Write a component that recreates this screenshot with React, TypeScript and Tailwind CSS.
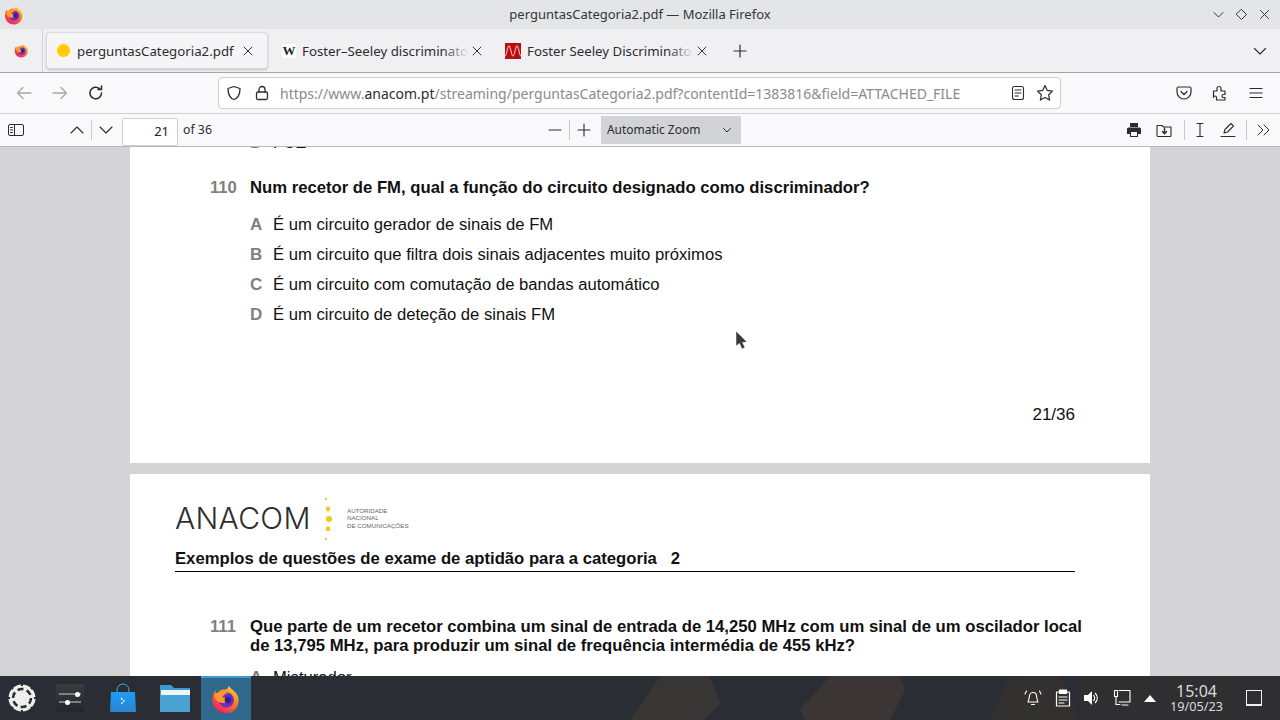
import React from "react";

const stroke = { fill: "none", stroke: "currentColor", strokeWidth: 1.3, strokeLinecap: "round" as const, strokeLinejoin: "round" as const };

function Fox({ size = 18 }: { size?: number }) {
  return (
    <svg width={size} height={size} viewBox="0 0 32 32">
      <defs>
        <linearGradient id="fxa" x1="0.8" y1="0.05" x2="0.25" y2="0.95">
          <stop offset="0" stopColor="#ffd43a" />
          <stop offset="0.45" stopColor="#ff7a1f" />
          <stop offset="1" stopColor="#f0206a" />
        </linearGradient>
      </defs>
      <path d="M19 1c0 4 8 6 10 13 2 9-4 17-13 17C7 31 1 24 1.500 15.500 2 11 3.500 8 5 7c0 2 .5 3 1.500 4C8 7 12 5 15 6c3-1 4-2 4-5z" fill="url(#fxa)" />
      <circle cx="16.500" cy="17" r="8" fill="#6a2fc0" />
      <path d="M4 11c4-3 10-3 14-1-3 0-5 2-6 4 3 1 6 0 7 2-1 4-5 5-8 4-4-1-8-4-7-9z" fill="#ff9a2e" />
      <circle cx="18" cy="17" r="3.500" fill="#3b1c8c" />
    </svg>
  );
}

function Divider() {
  return <div className="w-px h-[20px] bg-[#c8c8cb]" />;
}

function Close({ className = "" }: { className?: string }) {
  return (
    <svg width="12" height="12" viewBox="0 0 12 12" className={className} {...stroke} strokeWidth={1}>
      <path d="M2 2l8 8M10 2l-8 8" />
    </svg>
  );
}

function TitleBar() {
  return (
    <div className="h-[29px] bg-[#e3e5e7] flex items-center relative shrink-0">
      <div className="pl-[4px] w-[68px] flex"><Fox size={20} /></div>
      <div className="flex-1 text-center text-[13px] text-[#31363b]">perguntasCategoria2.pdf — Mozilla Firefox</div>
      <div className="flex items-center gap-[10px] pr-[9px] text-[#31363b]">
        <svg width="13" height="13" viewBox="0 0 13 13" {...stroke} strokeWidth={1}><path d="M2 4.500l4.500 4.500L11 4.500" /></svg>
        <svg width="13" height="13" viewBox="0 0 13 13" {...stroke} strokeWidth={1}><path d="M6.500 1.500l5 5-5 5-5-5z" /></svg>
        <svg width="13" height="13" viewBox="0 0 13 13" {...stroke} strokeWidth={1}><path d="M2.500 2.500l8 8M10.500 2.500l-8 8" /></svg>
      </div>
    </div>
  );
}

function FadeText({ children, w }: { children: React.ReactNode; w: string }) {
  return (
    <div className={`${w} overflow-hidden whitespace-nowrap text-[13.250px] text-[#2c2c30] relative pt-[3px]`}>
      {children}
      <div className="absolute right-0 top-0 bottom-0 w-[26px] bg-gradient-to-r from-transparent to-[#f0f0f2]" />
    </div>
  );
}

function TabBar() {
  return (
    <div className="h-[44px] bg-[#f0f0f2] border-b border-[#a5a5a8] flex items-center shrink-0">
      <div className="w-[43px] h-full border-r border-[#d4d4d6] flex items-center justify-center pb-[1px]"><Fox size={15} /></div>
      <div className="ml-[3px] w-[222px] h-[37px] bg-[#f5f5f7] border border-[#dcdcde] rounded-[4px] shadow-[0_1px_2px_rgba(0,0,0,0.2)] flex items-center pl-[10px]">
        <div className="w-[13px] h-[13px] rounded-full bg-[#ffc90e] ring-1 ring-[#fff6c8]" />
        <span className="ml-[7px] pt-[3px] w-[165px] text-[13.250px] text-[#2c2c30] whitespace-nowrap">perguntasCategoria2.pdf</span>
        <Close className="text-[#31363b]" />
      </div>
      <div className="ml-[14px] w-[14px] h-[14px] bg-white flex items-center justify-center text-[13px] font-bold text-[#222] font-['Liberation_Serif',serif]">W</div>
      <div className="ml-[6px]"><FadeText w="w-[167px]">Foster–Seeley discriminator</FadeText></div>
      <Close className="ml-[2px] text-[#31363b]" />
      <div className="ml-[22px] w-[16px] h-[16px] bg-[#b50d10] flex items-center justify-center">
        <svg width="16" height="16" viewBox="0 0 16 16" fill="none" stroke="#ffb0a8" strokeWidth="1.200"><path d="M0 13c2 0 2-10 4-10s2 10 4 10 2-10 4-10 2 10 4 10" /></svg>
      </div>
      <div className="ml-[6px]"><FadeText w="w-[167px]">Foster Seeley Discriminator</FadeText></div>
      <Close className="ml-[2px] text-[#31363b]" />
      <svg width="14" height="14" viewBox="0 0 14 14" className="ml-[25px] text-[#2c2c30]" {...stroke} strokeWidth={1.200}><path d="M7 1v12M1 7h12" /></svg>
      <div className="flex-1" />
      <svg width="14" height="14" viewBox="0 0 14 14" className="mr-[13px] text-[#2c2c30]" {...stroke} strokeWidth={1.100}><path d="M1.500 4.500L7 10l5.500-5.500" /></svg>
    </div>
  );
}

function NavBar() {
  return (
    <div className="h-[41px] bg-[#f9f9fb] border-b border-[#cfcfd2] flex items-center shrink-0">
      <svg width="16" height="16" viewBox="0 0 16 16" className="ml-[16px] text-[#a8a8ab]" {...stroke}><path d="M15 8H1.500M7 2.500L1.500 8 7 13.500" /></svg>
      <svg width="16" height="16" viewBox="0 0 16 16" className="ml-[20px] text-[#a8a8ab]" {...stroke}><path d="M1 8h13.500M9 2.500L14.500 8 9 13.500" /></svg>
      <svg width="16" height="16" viewBox="0 0 16 16" className="ml-[20px] text-[#2c2c30]" {...stroke} strokeWidth={1.500}><path d="M13.500 8a5.800 5.800 0 1 1-2-4.400M13.500 1v3.500H10" /></svg>
      <div className="ml-[114px] w-[843px] h-[32px] bg-white border border-[#cfcfd2] rounded-[4px] flex items-center pl-[7px]">
        <svg width="16" height="16" viewBox="0 0 16 16" className="text-[#2c2c30]" {...stroke}><path d="M8 1.500l6 2c0 6-1.500 9.500-6 11-4.500-1.500-6-5-6-11z" /></svg>
        <svg width="16" height="16" viewBox="0 0 16 16" className="ml-[12px] text-[#2c2c30]" {...stroke}><rect x="2.500" y="7" width="11" height="7.500" rx="1.500" /><path d="M5 7V4.500a3 3 0 0 1 6 0V7" /></svg>
        <div className="ml-[10px] pt-[1px] w-[690px] whitespace-nowrap text-[14px] text-[#8a8a8f]">https://www.<span className="text-[#2c2c30]">anacom.pt</span>/streaming/perguntasCategoria2.pdf?contentId=1383816&amp;field=ATTACHED_FILE</div>
        <div className="flex-1" />
        <svg width="16" height="16" viewBox="0 0 16 16" className="text-[#2c2c30]" {...stroke} strokeWidth={1.100}><rect x="2.500" y="1.500" width="11" height="13" rx="2" /><path d="M5 5h6M5 8h6M5 11h3.500" /></svg>
        <svg width="18" height="18" viewBox="0 0 18 18" className="ml-[10px] mr-[6px] text-[#2c2c30]" {...stroke} strokeWidth={1.200}><path d="M9 1.500l2.300 4.900 5.200.7-3.800 3.700.9 5.300L9 13.500l-4.600 2.600.9-5.300L1.500 7.100l5.200-.7z" /></svg>
      </div>
      <div className="flex-1" />
      <svg width="16" height="16" viewBox="0 0 16 16" className="mr-[20px] text-[#2c2c30]" {...stroke} strokeWidth={1.200}><path d="M2.500 2h11A1.500 1.500 0 0 1 15 3.500V7A7 7 0 0 1 1 7V3.500A1.500 1.500 0 0 1 2.500 2z" /><path d="M5 6.500l3 3 3-3" /></svg>
      <svg width="16" height="16" viewBox="0 0 16 16" className="mr-[20px] text-[#2c2c30]" {...stroke} strokeWidth={1.200}><path d="M1.500 6H5V3.500a2 2 0 0 1 4 0V6h4v3.500h-1.500a1.500 1.500 0 0 0 0 3H13V15H4.500v-2.500a1.500 1.500 0 0 0-3 0z" /></svg>
      <svg width="16" height="16" viewBox="0 0 16 16" className="mr-[16px] text-[#2c2c30]" {...stroke} strokeWidth={1.200}><path d="M2 3.500h12M2 8h12M2 12.500h12" /></svg>
    </div>
  );
}

function PdfBar() {
  return (
    <div className="h-[33px] bg-[#f9f9fb] border-b border-[#b8b8bb] flex items-center shrink-0 relative z-10">
      <svg width="16" height="14" viewBox="0 0 16 14" className="ml-[8px] text-[#2c2c30]" {...stroke} strokeWidth={1}><rect x="0.500" y="1.500" width="15" height="11" rx="1.500" /><path d="M6.500 1.500v11M2.500 4.500h2M2.500 7h2M2.500 9.500h2" /></svg>
      <svg width="14" height="14" viewBox="0 0 14 14" className="ml-[46px] text-[#2c2c30]" {...stroke} strokeWidth={1.100}><path d="M1 10l6-6 6 6" /></svg>
      <div className="ml-[7px] w-px h-[20px] bg-[#c8c8cb]" />
      <svg width="14" height="14" viewBox="0 0 14 14" className="ml-[7px] text-[#2c2c30]" {...stroke} strokeWidth={1.100}><path d="M1 4l6 6 6-6" /></svg>
      <div className="ml-[9px] w-[56px] h-[28px] mt-[3px] bg-white border border-[#cfcfd2] rounded-[2px] flex items-center justify-end pr-[8px] text-[13px] text-[#222]">21</div>
      <span className="ml-[5px] text-[12.300px] text-[#2c2c30]">of 36</span>
      <svg width="14" height="14" viewBox="0 0 14 14" className="ml-[336px] text-[#2c2c30]" {...stroke} strokeWidth={1.100}><path d="M1 7h12" /></svg>
      <div className="ml-[7px] w-px h-[20px] bg-[#c8c8cb]" />
      <svg width="14" height="14" viewBox="0 0 14 14" className="ml-[7px] text-[#2c2c30]" {...stroke} strokeWidth={1.100}><path d="M7 1v12M1 7h12" /></svg>
      <div className="ml-[10px] w-[140px] h-[28px] bg-[#d2d3d6] flex items-center pl-[6px] text-[12px] text-[#2c2c30]">
        <span>Automatic Zoom</span>
        <svg width="10" height="10" viewBox="0 0 10 10" className="ml-[22px]" {...stroke} strokeWidth={1}><path d="M1.500 3.500L5 7l3.500-3.500" /></svg>
      </div>
      <div className="flex-1" />
      <svg width="16" height="16" viewBox="0 0 16 16" className="text-[#2c2c30]"><path d="M4 1h8v4H4zM2.500 5.500h11A1.500 1.500 0 0 1 15 7v5h-3v3H4v-3H1V7a1.500 1.500 0 0 1 1.500-1.500z" fill="currentColor" /><rect x="5" y="10" width="6" height="4" fill="#f9f9fb" /></svg>
      <svg width="16" height="16" viewBox="0 0 16 16" className="ml-[14px] text-[#2c2c30]" {...stroke} strokeWidth={1.100}><path d="M1 3.500h5l1.500 1.500H15v8.500a1 1 0 0 1-1 1H2a1 1 0 0 1-1-1z" /><path d="M8.500 6v5.500M6.500 9.500l2 2.200 2-2.200" strokeWidth={1.400} /></svg>
      <div className="ml-[12px]"><Divider /></div>
      <svg width="14" height="16" viewBox="0 0 14 16" className="ml-[8px] text-[#2c2c30]" {...stroke} strokeWidth={1.100}><path d="M4 1.500h6M4 14.500h6M7 1.500v13" /></svg>
      <svg width="18" height="16" viewBox="0 0 18 16" className="ml-[12px] text-[#2c2c30]" {...stroke} strokeWidth={1.100}><path d="M5 11l1-3.500L12 1.500l2.500 2.500L8.500 10zM2 14.500h14" /></svg>
      <div className="ml-[9px]"><Divider /></div>
      <svg width="16" height="14" viewBox="0 0 16 14" className="ml-[9px] mr-[8px] text-[#2c2c30]" {...stroke} strokeWidth={1}><path d="M2 2l5 5-5 5M8 2l5 5-5 5" /></svg>
    </div>
  );
}

function Opt({ l, t }: { l: string; t: string }) {
  return (
    <div className="h-[30px] flex items-center pl-[120px]">
      <span className="w-[23px] text-[17px] font-bold text-[#808080]">{l}</span>
      <span className="text-[16.650px] text-[#111]">{t}</span>
    </div>
  );
}

function Doc() {
  return (
    <div className="flex-1 min-h-0 bg-[#d4d4d7] overflow-hidden font-['Liberation_Sans',sans-serif] pl-[130px]">
      <div className="w-[1020px] bg-white h-[316px] relative overflow-hidden">
        <div className="absolute left-[120px] top-[-16px] flex items-center text-[16.650px] text-[#111]">
          <span className="w-[23px] font-bold text-[#808080]">D</span>FOZ
        </div>
        <div className="pt-[28px] flex items-center pl-[80px] text-[16.680px] font-bold text-[#111]">
          <span className="w-[40px] text-[#808080]">110</span>
          <span>Num recetor de FM, qual a função do circuito designado como discriminador?</span>
        </div>
        <div className="mt-[10px]">
          <Opt l="A" t="É um circuito gerador de sinais de FM" />
          <Opt l="B" t="É um circuito que filtra dois sinais adjacentes muito próximos" />
          <Opt l="C" t="É um circuito com comutação de bandas automático" />
          <Opt l="D" t="É um circuito de deteção de sinais FM" />
        </div>
        <div className="mt-[72px] pr-[75px] text-right text-[17px] text-[#111]">21/36</div>
      </div>
      <div className="w-[1020px] bg-white mt-[11px] h-[300px]">
        <div className="pt-[22px] pl-[45px] flex items-center h-[67px]">
          <span className="w-[136px] text-[30px] font-['Inter',sans-serif] text-[#2e2e2e] tracking-[0.3px] leading-none font-light mt-[-1px] whitespace-nowrap">ANACOM</span>
          <svg width="12" height="46" viewBox="0 0 12 46" className="ml-[11px] mt-[1px]">
            <circle cx="4" cy="3" r="1.300" fill="#e8d04a" />
            <circle cx="6" cy="13" r="2.400" fill="#eecb2c" />
            <circle cx="7" cy="23" r="3" fill="#f2c811" />
            <circle cx="6" cy="33" r="2.400" fill="#eecb2c" />
            <circle cx="4" cy="43" r="1.300" fill="#e8d04a" />
          </svg>
          <div className="ml-[13px] text-[6.200px] leading-[7.500px] text-[#666] mt-[-1px] whitespace-nowrap">
            <div>AUTORIDADE</div>
            <div>NACIONAL</div>
            <div>DE COMUNICAÇÕES</div>
          </div>
        </div>
        <div className="ml-[45px] w-[900px] border-b border-black h-[26px] text-[16.680px] font-bold text-[#111] whitespace-pre leading-[26px] mt-[5px]">Exemplos de questões de exame de aptidão para a categoria   2</div>
        <div className="mt-[45px] flex pl-[80px] text-[16.680px] font-bold text-[#111] leading-[19px]">
          <span className="w-[40px] text-[#808080]">111</span>
          <div className="whitespace-nowrap">
            <div>Que parte de um recetor combina um sinal de entrada de 14,250 MHz com um sinal de um oscilador local</div>
            <div>de 13,795 MHz, para produzir um sinal de frequência intermédia de 455 kHz?</div>
          </div>
        </div>
        <div className="mt-[8px]"><Opt l="A" t="Misturador" /></div>
      </div>
    </div>
  );
}

function Task() {
  return (
    <div className="h-[44px] bg-[#2a2d34] flex items-center shrink-0 relative z-10 overflow-hidden">
      <svg width="1280" height="44" viewBox="0 0 1280 44" className="absolute left-0 top-0">
        <path d="M660 0h50l10 27-15 17h-75z" fill="#383634" />
        <path d="M830 0h70l5 14-15 30h-85l-5-10z" fill="#3c3536" />
        <path d="M1010 0h50l20 44h-90z" fill="#33312f" />
        <path d="M1080 0h200v44h-200z" fill="#2f2e31" />
      </svg>
      <div className="relative flex items-center h-full w-full">
        <svg width="30" height="30" viewBox="0 0 30 30" className="ml-[7px]">
          <circle cx="15" cy="15" r="13.500" fill="#eeeeee" />
          <circle cx="15" cy="15" r="9" fill="none" stroke="#2a2d34" strokeWidth="2.600" strokeDasharray="6 3.400" />
          <circle cx="15" cy="15" r="6.500" fill="#eeeeee" />
          <g stroke="#2a2d34" strokeWidth="2">
            <path d="M15 0v3M15 27v3M0 15h3M27 15h3M4 4l2 2M24 24l2 2M26 4l-2 2M6 24l-2 2" />
          </g>
        </svg>
        <div className="ml-[19px] w-[28px] h-[28px] bg-gradient-to-b from-[#3a3d40] to-[#23262a] flex flex-col justify-center gap-[6px] px-[3px]">
          <div className="h-[2px] bg-[#7d8185] relative"><div className="absolute left-[16px] top-[-1.500px] w-[5px] h-[5px] rounded-full bg-white" /></div>
          <div className="h-[2px] bg-[#7d8185] relative"><div className="absolute left-[6px] top-[-1.500px] w-[5px] h-[5px] rounded-full bg-white" /></div>
        </div>
        <svg width="26" height="30" viewBox="0 0 26 30" className="ml-[26px]">
          <defs>
            <linearGradient id="bag" x1="0" y1="0" x2="0" y2="1">
              <stop offset="0" stopColor="#1f9cf5" />
              <stop offset="1" stopColor="#2a83d0" />
            </linearGradient>
          </defs>
          <path d="M7 10V7a6 6 0 0 1 12 0v3" fill="none" stroke="#3daee9" strokeWidth="1" />
          <path d="M1 9h24l1 20H0z" fill="url(#bag)" />
          <path d="M11 15l3 3-3 3" fill="none" stroke="#d8f0ff" strokeWidth="1.500" strokeDasharray="2 1" />
        </svg>
        <svg width="30" height="28" viewBox="0 0 30 28" className="ml-[24px]">
          <path d="M0 1h11l3 3h16v24H0z" fill="#3a9bd0" />
          <path d="M1 6h29v6H1z" fill="#eef6fa" />
          <path d="M0 11h30v17H0z" fill="#4aa3d3" />
        </svg>
        <div className="ml-[11px] w-[50px] h-full bg-[#2f6a8c] border-t-[2px] border-[#3e9bd0] flex items-center justify-center"><Fox size={30} /></div>
        <div className="flex-1" />
        <svg width="20" height="20" viewBox="0 0 20 20" className="text-white" {...stroke} strokeWidth={1.100}><path d="M5 14c1-2 1-4 1.500-6a3.500 3.500 0 0 1 7 0c.5 2 .5 4 1.500 6zM8.500 16.500h3M2 6l1.500-3M18 6l-1.500-3" /></svg>
        <svg width="16" height="18" viewBox="0 0 16 18" className="ml-[12px] text-white" {...stroke} strokeWidth={1.200}><rect x="1.500" y="3" width="13" height="14" /><rect x="4.500" y="1" width="7" height="3.500" fill="currentColor" /><path d="M4 8h8M4 11h8M4 14h5" /></svg>
        <svg width="18" height="18" viewBox="0 0 18 18" className="ml-[12px] text-white"><path d="M1 6h4l4-4v14l-4-4H1z" fill="currentColor" /><path d="M12 4c3 3 3 7 0 10M10.500 6c1.500 2 1.500 4 0 6" fill="none" stroke="currentColor" strokeWidth="1.200" /></svg>
        <svg width="18" height="18" viewBox="0 0 18 18" className="ml-[12px] text-white" {...stroke} strokeWidth={1.100}><path d="M6 1.500h11V13H6M1.500 1.500h3v6h-3zM3 7.500v8h4M9 16h6" /></svg>
        <svg width="12" height="7" viewBox="0 0 12 7" className="ml-[13px] text-white"><path d="M6 0l6 7H0z" fill="currentColor" /></svg>
        <div className="ml-[14px] w-[53px] text-center font-['Noto_Sans',sans-serif] text-[#d8dadc]">
          <div className="text-[16px] leading-[15px] mt-[1px]">15:04</div>
          <div className="text-[12.700px] leading-[15px] whitespace-nowrap">19/05/23</div>
        </div>
        <div className="ml-[23px] mr-[18px] w-[16px] h-[16px] border border-[#eff0f1] border-b-[2px]" />
      </div>
    </div>
  );
}

export default function App() {
  return (
    <div className="h-screen flex flex-col overflow-hidden font-['Noto_Sans',sans-serif] relative">
      <TitleBar />
      <TabBar />
      <NavBar />
      <PdfBar />
      <Doc />
      <Task />
      <svg width="14" height="22" viewBox="0 0 14 22" className="absolute left-[735px] top-[330px]">
        <path d="M1 1v15l3.500-2.500L7 19l3-1.500-2.500-5 4.500-.5z" fill="#3a3a3c" stroke="#fff" strokeWidth="0.500" />
      </svg>
    </div>
  );
}
